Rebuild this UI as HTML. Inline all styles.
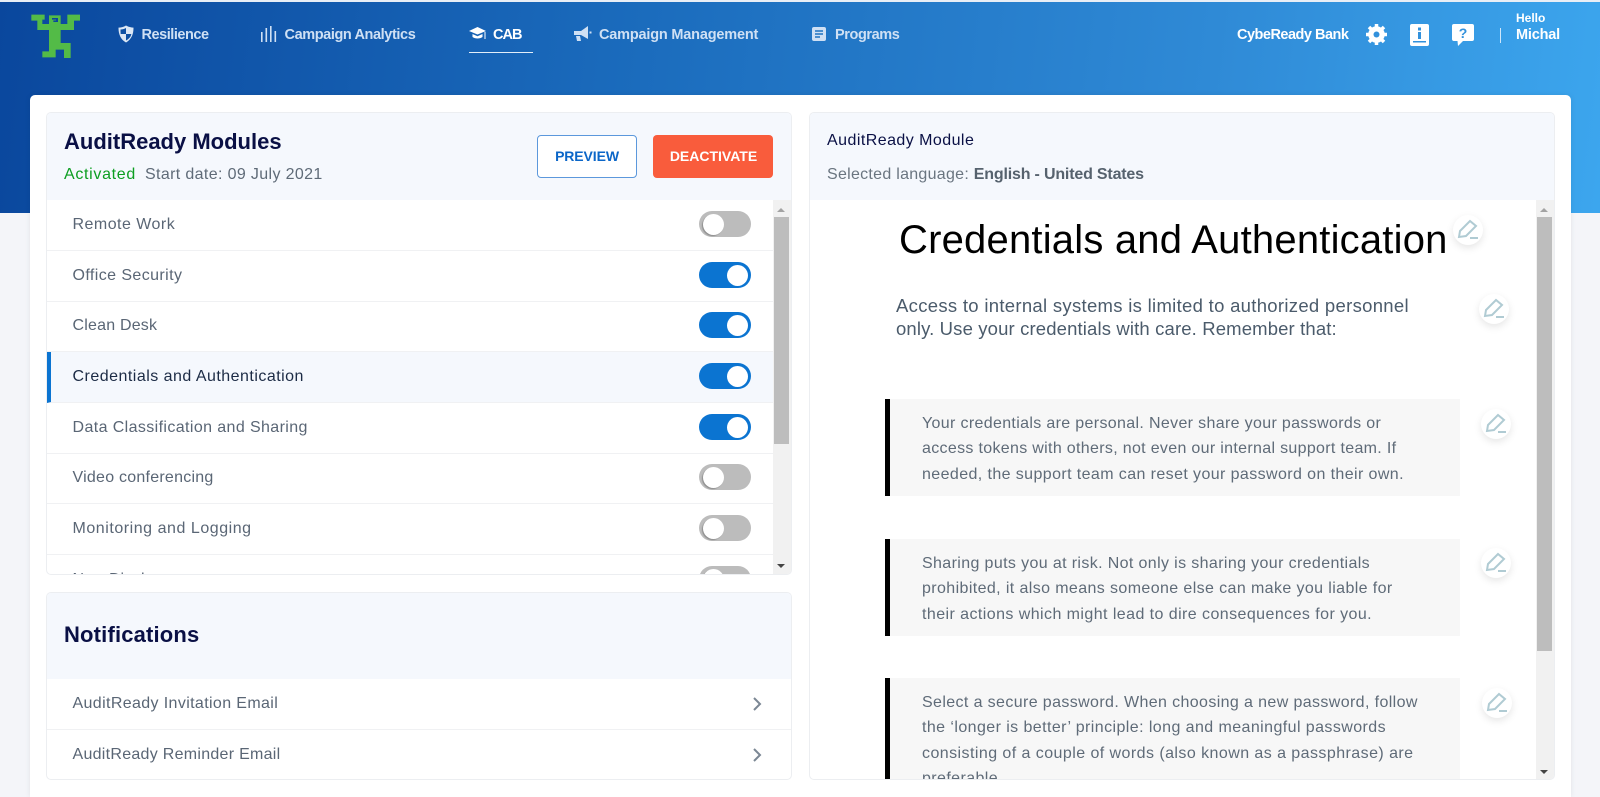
<!DOCTYPE html>
<html><head><meta charset="utf-8"><title>AuditReady</title>
<style>
*{box-sizing:border-box}
html,body{margin:0;padding:0;width:1600px;height:797px;overflow:hidden;background:#f4f5f9;font-family:"Liberation Sans",sans-serif}
.a{position:absolute;white-space:nowrap}
#hd{position:absolute;left:0;top:2px;width:1600px;height:211px;background:linear-gradient(97deg,#0a479d 0%,#1b6cbd 40%,#2f8ad6 75%,#3ca6ee 100%)}
#top{position:absolute;left:0;top:0;width:1600px;height:2px;background:#e8eef6}
.nav{font-weight:bold;font-size:14.5px;line-height:18px;color:#cfe0f4;top:26px}
#card{position:absolute;left:30px;top:95px;width:1541px;height:702px;background:#fff;border-radius:5px 5px 0 0;box-shadow:0 0 6px rgba(0,0,0,.08)}
.p{position:absolute;border:1px solid #eceef1;border-radius:5px;overflow:hidden;background:#fff}
.ph{position:absolute;left:0;top:0;right:0;background:#f5f8fd}
.r{position:absolute;left:0;width:728px;height:51px;border-bottom:1px solid #f0f1f3;color:#5a6675;font-size:16px;line-height:50px;padding-left:25.5px}
.r.s{background:#f5f8fd;color:#1c2b45;border-left:4px solid #0b74d1;padding-left:21.5px}
.t{position:absolute;left:652px;top:11px;width:52px;height:26px;border-radius:13px;background:#bcbcbc}
.t:after{content:"";position:absolute;left:3.5px;top:2.5px;width:21px;height:21px;border-radius:50%;background:#fff;box-shadow:-1px 1px 1px rgba(0,0,0,.25)}
.t.on{background:#0b74d1}.t.on:after{left:28px;box-shadow:none}
.sb{position:absolute;width:18px;background:#f1f1f1}
.th{position:absolute;background:#bdbdbd}
.up,.dn{position:absolute;width:0;height:0;border-left:4px solid transparent;border-right:4px solid transparent}
.up{border-bottom:4px solid #a3a3a3}.dn{border-top:4px solid #444}
.q{position:absolute;left:885px;width:575px;background:#f7f7f7;border-left:5px solid #000;color:#5f6b78;font-size:16px;line-height:25.4px;padding:12px 0 0 32px;white-space:nowrap}
.pen{position:absolute;width:30px;height:30px;border-radius:50%;background:#fff;box-shadow:0 3px 8px rgba(0,0,0,.1)}
.pen svg{position:absolute;left:3px;top:3px}
</style></head><body>
<div id="top"></div><div id="hd"></div>

<svg class="a" style="left:24px;top:8px" width="60" height="60" viewBox="0 0 180 180"><path fill="#53bb47" d="M22 20H62V35H55V48H75V22H110V48H130V20H168V38H150V66H110V105H140V150H120V125H95V148H55V130H75V66H40V38H22Z"/><path fill="#0a479d" d="M84 30H102V42H88V37H96V35H84Z"/></svg>

<svg class="a" style="left:117px;top:25px" width="18" height="18" viewBox="0 0 18 18"><path fill="#dbe7f5" d="M9 .5C11.5 2 14 2.6 16.5 2.6 16.6 9 14.5 14.5 9 17.5 3.5 14.500 1.400 9 1.500 2.600 4 2.600 6.500 2 9 .5Z"/><path fill="#0e50a3" d="M9 3V9H14.300C14 11.500 12 14 9 15.500V9H3.700C3.500 7.500 3.500 6 3.500 4.500 5.500 4.500 7.300 4 9 3Z"/></svg>
<div class="a nav" style="left:141.500px;letter-spacing:-.46px">Resilience</div>
<svg class="a" style="left:261px;top:26px" width="16" height="17" fill="#cfe0f4"><rect x="0" y="6" width="1.600" height="10"/><rect x="4.500" y="2" width="1.600" height="14"/><rect x="9" y="0" width="1.600" height="16"/><rect x="13.500" y="5" width="1.600" height="11"/></svg>
<div class="a nav" style="left:284.500px;letter-spacing:-.4px">Campaign Analytics</div>
<svg class="a" style="left:469px;top:26px" width="18" height="16" viewBox="0 0 18 16" fill="#fff"><path d="M8.500 1 17 5 8.500 8.500 0 5Z"/><path d="M3.500 8 8.500 10.200 13.500 8V11C11 13 6 13 3.500 11Z"/><rect x="15.500" y="6" width="1" height="7"/></svg>
<div class="a nav" style="left:493px;color:#fff;letter-spacing:-1px">CAB</div>
<div class="a" style="left:469px;top:52px;width:64px;height:1px;background:#e3eef9"></div>
<svg class="a" style="left:574px;top:25px" width="18" height="18" viewBox="0 0 18 18" fill="#cfe0f4"><path d="M0 6H7L14 1V14L7 10H0Z"/><path d="M2 11H6L7 16H3Z"/><rect x="15.500" y="6.500" width="2" height="2"/></svg>
<div class="a nav" style="left:599px;letter-spacing:-.19px">Campaign Management</div>
<svg class="a" style="left:812px;top:27px" width="14" height="14" viewBox="0 0 14 14"><rect width="14" height="14" rx="2" fill="#cfe0f4"/><path stroke="#1f72c2" stroke-width="1.500" d="M3 4H11M3 7H11M3 10H8"/></svg>
<div class="a nav" style="left:835px;letter-spacing:-.41px">Programs</div>

<div class="a nav" style="left:1237px;color:#fff;letter-spacing:-.5px">CybeReady Bank</div>
<svg class="a" style="left:1366px;top:24px" width="21" height="21" viewBox="0 0 21 21"><circle cx="10.500" cy="10.500" r="6" fill="none" stroke="#fff" stroke-width="4.500"/><path stroke="#fff" stroke-width="3.500" d="M10.500 0V21M0 10.500H21M3 3 18 18M18 3 3 18"/><circle cx="10.500" cy="10.500" r="3" fill="#3291dc"/></svg>
<svg class="a" style="left:1410px;top:24px" width="19" height="22" viewBox="0 0 19 22"><rect width="19" height="22" rx="2" fill="#fff"/><rect x="8" y="3.500" width="3" height="3" fill="#3291dc"/><rect x="8" y="8" width="3" height="7" fill="#3291dc"/><rect x="3" y="17" width="13" height="1.500" fill="#3291dc"/></svg>
<svg class="a" style="left:1452px;top:24px" width="22" height="22" viewBox="0 0 22 22"><path fill="#fff" d="M2 0H20A2 2 0 0 1 22 2V15A2 2 0 0 1 20 17H11L6 22 5.500 17H2A2 2 0 0 1 0 15V2A2 2 0 0 1 2 0Z"/><text x="11" y="14" font-size="14" font-weight="bold" text-anchor="middle" fill="#3291dc" font-family="Liberation Sans">?</text></svg>
<div class="a" style="left:1499.500px;top:28px;width:1px;height:15px;background:#cfe6fa"></div>
<div class="a" style="left:1516px;top:10px;font-size:12px;line-height:16px;font-weight:bold;color:#fff">Hello</div>
<div class="a nav" style="left:1516px;color:#fff;letter-spacing:-.2px">Michal</div>

<div id="card"></div>

<!-- Left panel -->
<div class="p" style="left:46px;top:112px;width:746px;height:463px">
<div class="ph" style="height:87px"></div>
<div class="a" style="left:17px;top:16px;font-size:22px;line-height:26px;font-weight:bold;color:#0a1045">AuditReady Modules</div>
<div class="a" style="left:17px;top:52px;font-size:16px;line-height:20px;color:#0c9e21;letter-spacing:.68px">Activated</div>
<div class="a" style="left:98px;top:52px;font-size:16px;line-height:20px;color:#5f6b78;letter-spacing:.36px">Start date: 09 July 2021</div>
<div class="a" style="left:490px;top:22px;width:100px;height:43px;border:1px solid #5c98dc;border-radius:4px;background:#fff;color:#0b66c8;font-size:14px;font-weight:bold;line-height:41px;text-align:center;letter-spacing:-.1px">PREVIEW</div>
<div class="a" style="left:606px;top:22px;width:120px;height:43px;border-radius:4px;background:#f95c3c;color:#fff;font-size:14px;font-weight:bold;line-height:43px;text-align:center;padding-left:1px">DEACTIVATE</div>
<div class="r" style="top:87px;letter-spacing:.47px">Remote Work<i class="t"></i></div>
<div class="r" style="top:138px;letter-spacing:.41px">Office Security<i class="t on"></i></div>
<div class="r" style="top:188px;letter-spacing:.2px">Clean Desk<i class="t on"></i></div>
<div class="r s" style="top:239px;letter-spacing:.48px">Credentials and Authentication<i class="t on" style="left:648px"></i></div>
<div class="r" style="top:290px;letter-spacing:.39px">Data Classification and Sharing<i class="t on"></i></div>
<div class="r" style="top:340px;letter-spacing:.24px">Video conferencing<i class="t"></i></div>
<div class="r" style="top:391px;letter-spacing:.54px">Monitoring and Logging<i class="t"></i></div>
<div class="r" style="top:442px;border:0">New Display<i class="t"></i></div>
<div class="sb" style="left:726px;top:87px;height:376px"></div>
<div class="th" style="left:727px;top:104px;width:15px;height:227px"></div>
<div class="up" style="left:730px;top:95px"></div><div class="dn" style="left:730px;top:451px"></div>
</div>

<!-- Notifications -->
<div class="p" style="left:46px;top:592px;width:746px;height:188px">
<div class="ph" style="height:86px"></div>
<div class="a" style="left:17px;top:29px;font-size:22px;line-height:26px;font-weight:bold;color:#0a1045;letter-spacing:.17px">Notifications</div>
<div class="r" style="top:86px;width:746px;letter-spacing:.37px">AuditReady Invitation Email<svg class="a" style="left:705px;top:18px" width="12" height="14" fill="none" stroke="#7b8794" stroke-width="2"><path d="M2 1 8 7 2 13"/></svg></div>
<div class="r" style="top:137px;width:746px;border:0;letter-spacing:.28px">AuditReady Reminder Email<svg class="a" style="left:705px;top:18px" width="12" height="14" fill="none" stroke="#7b8794" stroke-width="2"><path d="M2 1 8 7 2 13"/></svg></div>
</div>

<!-- Right panel -->
<div class="p" style="left:809px;top:112px;width:746px;height:668px">
<div class="ph" style="height:87px"></div>
<div class="a" style="left:17px;top:19px;font-size:16px;line-height:18px;color:#0a1045;letter-spacing:.45px">AuditReady Module</div>
<div class="a" style="left:17px;top:52px;font-size:16px;line-height:20px;color:#6a7580;letter-spacing:.28px">Selected language: <b style="color:#56626e;letter-spacing:-.18px">English - United States</b></div>
<div class="sb" style="left:726px;top:87px;height:581px"></div>
<div class="th" style="left:727px;top:104px;width:15px;height:434px"></div>
<div class="up" style="left:730px;top:95px"></div><div class="dn" style="left:730px;top:657px"></div>
</div>

<div class="a" style="left:899px;top:216px;font-size:40px;line-height:48px;color:#000;letter-spacing:.2px">Credentials and Authentication</div>
<div class="a" style="left:896px;top:295px;font-size:18.500px;line-height:22.500px;color:#4b5b6b"><span style="letter-spacing:.3px">Access to internal systems is limited to authorized personnel</span><br><span style="letter-spacing:.14px">only. Use your credentials with care. Remember that:</span></div>

<div class="q" style="top:399px;height:97px"><span style="letter-spacing:.34px">Your credentials are personal. Never share your passwords or</span><br><span style="letter-spacing:.32px">access tokens with others, not even our internal support team. If</span><br><span style="letter-spacing:.4px">needed, the support team can reset your password on their own.</span></div>
<div class="q" style="top:539px;height:97px"><span style="letter-spacing:.37px">Sharing puts you at risk. Not only is sharing your credentials</span><br><span style="letter-spacing:.39px">prohibited, it also means someone else can make you liable for</span><br><span style="letter-spacing:.43px">their actions which might lead to dire consequences for you.</span></div>
<div class="q" style="top:678px;height:101px;overflow:hidden"><span style="letter-spacing:.38px">Select a secure password. When choosing a new password, follow</span><br><span style="letter-spacing:.42px">the ‘longer is better’ principle: long and meaningful passwords</span><br><span style="letter-spacing:.44px">consisting of a couple of words (also known as a passphrase) are</span><br><span style="letter-spacing:.4px">preferable.</span></div>

<div class="pen" style="left:1453px;top:215px"><svg width="24" height="24" viewBox="0 0 24 24" fill="none" stroke="#b0cbd3" stroke-width="2"><path d="M3 19 4 13 14 3 20 8 10 18Z"/><path d="M14 20H22"/></svg></div>
<div class="pen" style="left:1479px;top:294px"><svg width="24" height="24" viewBox="0 0 24 24" fill="none" stroke="#b0cbd3" stroke-width="2"><path d="M3 19 4 13 14 3 20 8 10 18Z"/><path d="M14 20H22"/></svg></div>
<div class="pen" style="left:1481px;top:409px"><svg width="24" height="24" viewBox="0 0 24 24" fill="none" stroke="#b0cbd3" stroke-width="2"><path d="M3 19 4 13 14 3 20 8 10 18Z"/><path d="M14 20H22"/></svg></div>
<div class="pen" style="left:1481px;top:548px"><svg width="24" height="24" viewBox="0 0 24 24" fill="none" stroke="#b0cbd3" stroke-width="2"><path d="M3 19 4 13 14 3 20 8 10 18Z"/><path d="M14 20H22"/></svg></div>
<div class="pen" style="left:1482px;top:688px"><svg width="24" height="24" viewBox="0 0 24 24" fill="none" stroke="#b0cbd3" stroke-width="2"><path d="M3 19 4 13 14 3 20 8 10 18Z"/><path d="M14 20H22"/></svg></div>
</body></html>
